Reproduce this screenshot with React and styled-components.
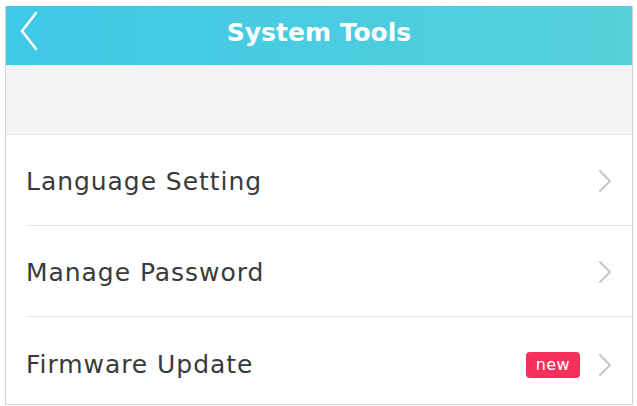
import React from 'react';
import styled, {createGlobalStyle} from 'styled-components';

// ========== Global ========== //
const GlobalStyle = createGlobalStyle`
	html, body {
		margin: 0;
		padding: 0;
		background: #ffffff;
		font-family: "DejaVu Sans", "Liberation Sans", sans-serif;
	}
	* { box-sizing: border-box; }
`;

// ========== Styled Components ========== //
const Page = styled.div`
	padding: 6px 4px 0 5px;
`;

const Frame = styled.div`
	width: 628px;
	height: 399px;
	border-left: 1px solid #d4d4d4;
	border-right: 1px solid #d4d4d4;
	border-bottom: 1px solid #d4d4d4;
	display: flex;
	flex-direction: column;
	overflow: hidden;
`;

const Header = styled.header`
	height: 59px;
	flex-shrink: 0;
	display: flex;
	align-items: center;
	justify-content: center;
	position: relative;
	background: linear-gradient(90deg, #3ec9e7 0%, #55d0da 100%);
`;

const BackButton = styled.button`
	position: absolute;
	left: 8px;
	top: 3px;
	width: 30px;
	height: 44px;
	padding: 0;
	border: none;
	background: transparent;
	display: flex;
	align-items: center;
	justify-content: center;
`;

const Title = styled.h1`
	margin: 0 0 6px 0;
	color: #ffffff;
	font-size: 25px;
	font-weight: 700;
`;

const Spacer = styled.div`
	height: 70px;
	flex-shrink: 0;
	background: #f4f4f6;
	border-bottom: 1px solid #e6e6e8;
`;

const List = styled.ul`
	list-style: none;
	margin: 0;
	padding: 0;
`;

const Row = styled.li`
	height: 91px;
	margin-left: 20px;
	padding-right: 20px;
	display: flex;
	align-items: center;
	border-bottom: ${props => props.last ? 'none' : '1px solid #e8e8e8'};
`;

const Label = styled.span`
	flex: 1;
	color: #3a3a3a;
	font-size: 25px;
	letter-spacing: 0.95px;
	margin-top: ${props => props.offset || 0}px;
`;

const Badge = styled.span`
	background: #f5305b;
	color: #ffffff;
	font-size: 16px;
	letter-spacing: 0.4px;
	line-height: 26px;
	padding: 0 10px;
	border-radius: 4px;
	margin-right: 18px;
	margin-top: ${props => props.offset || 0}px;
`;

const Chevron = styled.svg`
	width: 14px;
	height: 24px;
	margin-top: ${props => props.offset || 0}px;
`;

const ChevronRight = ({offset}) => (
	<Chevron viewBox="0 0 14 24" offset={offset}>
		<path d="M2 2 L12 12 L2 22" fill="none" stroke="#c9c9c9" strokeWidth="2.2" strokeLinecap="round" strokeLinejoin="round"/>
	</Chevron>
);

const items = [
	{label: 'Language Setting', offset: 2},
	{label: 'Manage Password', offset: 2},
	{label: 'Firmware Update', badge: 'new', offset: 4, last: true},
];

// ========== React Function Component ========== //
const App = () => {
	return (
		<Page>
			<GlobalStyle/>
			<Frame>
				<Header>
					<BackButton aria-label="Back">
						<svg width="20" height="40" viewBox="0 0 20 40">
							<path d="M17 2 L3 20 L17 38" fill="none" stroke="#ffffff" strokeWidth="2.6" strokeLinecap="round" strokeLinejoin="round"/>
						</svg>
					</BackButton>
					<Title>System Tools</Title>
				</Header>

				<Spacer/>

				<List>
					{items.map(item => (
						<Row key={item.label} last={item.last}>
							<Label offset={item.offset}>{item.label}</Label>
							{item.badge && <Badge offset={item.offset}>{item.badge}</Badge>}
							<ChevronRight offset={item.offset}/>
						</Row>
					))}
				</List>
			</Frame>
		</Page>
	);
}

export default App;
